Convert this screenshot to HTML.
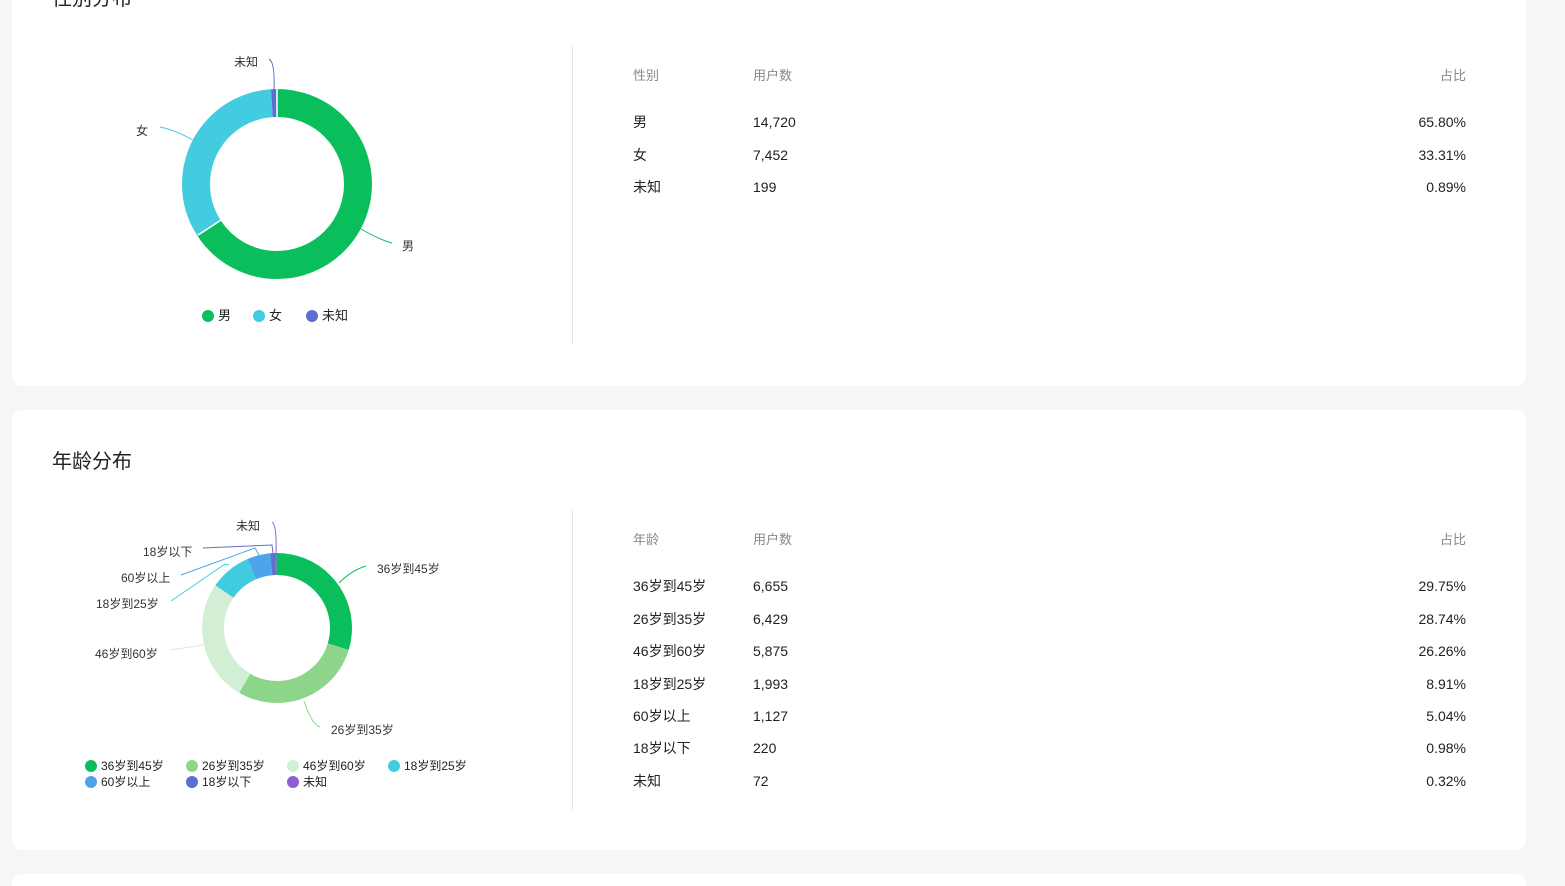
<!DOCTYPE html>
<html style="overflow:hidden;height:886px"><head><meta charset="utf-8"><style>
*{margin:0;padding:0;box-sizing:border-box}
body{width:1565px;height:886px;background:#f5f6f8;position:relative;overflow:hidden;font-family:"Liberation Sans","Noto Sans CJK SC",sans-serif;color:#222}
.card{position:absolute;left:12px;width:1514px;background:#fff;border-radius:10px}
.t{position:absolute;white-space:nowrap;font-size:14px;line-height:16px}
.h{color:#888;font-size:13px}
.r{text-align:right}
.title{position:absolute;font-size:20px;color:#222;white-space:nowrap}
.vl{position:absolute;left:572px;width:1px;background:#e8e8e8}
.lg{position:absolute;font-size:13px;white-space:nowrap;line-height:14px}
.dot{display:inline-block;width:12px;height:12px;border-radius:50%;vertical-align:-2px;margin-right:4px}
svg text{font-family:"Liberation Sans","Noto Sans CJK SC",sans-serif;font-size:12px;fill:#333}
</style></head><body>
<div class="card" style="top:-20px;height:406px"></div>
<div class="card" style="top:410px;height:440px"></div>
<div class="card" style="top:874px;height:12px;border-radius:10px 10px 0 0"></div>
<div class="title" style="left:52px;top:-18px">性别分布</div>
<div class="title" style="left:52px;top:445px">年龄分布</div>
<div class="vl" style="top:45px;height:300px"></div>
<div class="vl" style="top:510px;height:300px"></div>

<svg width="1565" height="886" style="position:absolute;left:0;top:0">
<g transform="rotate(-90 277 184)" fill="none" stroke-width="28">
<circle cx="277" cy="184" r="81" pathLength="100" stroke="#0abf5b" stroke-dasharray="65.8 34.2"/>
<circle cx="277" cy="184" r="81" pathLength="100" stroke="#43cbe0" stroke-dasharray="33.31 66.69" stroke-dashoffset="-65.8"/>
<circle cx="277" cy="184" r="81" pathLength="100" stroke="#5b6fd0" stroke-dasharray="0.89 99.11" stroke-dashoffset="-99.11"/>
</g>
<line x1="277" y1="89" x2="277" y2="118" stroke="#fff" stroke-width="1.5"/>
<line x1="198" y1="235" x2="221" y2="220" stroke="#fff" stroke-width="1.5"/>
<path d="M361 229 Q380 240 392 243" stroke="#0abf5b" fill="none"/>
<path d="M193 140 Q175 130 160 127" stroke="#43cbe0" fill="none"/>
<path d="M274 89 Q275 62 269 59" stroke="#5b6fd0" fill="none"/>
<text x="402" y="250">男</text><text x="136" y="135">女</text><text x="234" y="66">未知</text>

<g transform="rotate(-90 277 628)" fill="none" stroke-width="22">
<circle cx="277" cy="628" r="64" pathLength="100" stroke="#0abf5b" stroke-dasharray="29.75 70.25"/>
<circle cx="277" cy="628" r="64" pathLength="100" stroke="#8ed58c" stroke-dasharray="28.74 71.26" stroke-dashoffset="-29.75"/>
<circle cx="277" cy="628" r="64" pathLength="100" stroke="#d2eed5" stroke-dasharray="26.26 73.74" stroke-dashoffset="-58.49"/>
<circle cx="277" cy="628" r="64" pathLength="100" stroke="#41cbe0" stroke-dasharray="8.91 91.09" stroke-dashoffset="-84.75"/>
<circle cx="277" cy="628" r="64" pathLength="100" stroke="#4ea4e8" stroke-dasharray="5.04 94.96" stroke-dashoffset="-93.66"/>
<circle cx="277" cy="628" r="64" pathLength="100" stroke="#5b6fd0" stroke-dasharray="0.98 99.02" stroke-dashoffset="-98.7"/>
<circle cx="277" cy="628" r="64" pathLength="100" stroke="#8e5fd0" stroke-dasharray="0.32 99.68" stroke-dashoffset="-99.68"/>
</g>
<path d="M339 583 Q352 570 366 566" stroke="#0abf5b" fill="none"/>
<path d="M304 701 Q312 725 320 727" stroke="#8ed58c" fill="none"/>
<path d="M203 645 L170 650" stroke="#d2eed5" fill="none"/>
<path d="M229 565 L225 564 L171 601" stroke="#41cbe0" fill="none"/>
<path d="M259 555 L255 548 L181 575" stroke="#4ea4e8" fill="none"/>
<path d="M273 553 L272 545 L203 548" stroke="#5b6fd0" fill="none"/>
<path d="M276 553 Q277 525 272 522" stroke="#8e5fd0" fill="none"/>
<text x="377" y="573">36岁到45岁</text><text x="331" y="734">26岁到35岁</text>
<text x="95" y="658">46岁到60岁</text><text x="96" y="608">18岁到25岁</text>
<text x="121" y="582">60岁以上</text><text x="143" y="556">18岁以下</text><text x="236" y="530">未知</text>
</svg>

<div class="lg" style="left:202px;top:309px"><span class="dot" style="background:#0abf5b"></span>男</div>
<div class="lg" style="left:253px;top:309px"><span class="dot" style="background:#43cbe0"></span>女</div>
<div class="lg" style="left:306px;top:309px"><span class="dot" style="background:#5b6fd0"></span>未知</div>

<div class="lg" style="left:85px;top:759px;font-size:12px"><span class="dot" style="background:#0abf5b"></span>36岁到45岁</div>
<div class="lg" style="left:186px;top:759px;font-size:12px"><span class="dot" style="background:#8ed58c"></span>26岁到35岁</div>
<div class="lg" style="left:287px;top:759px;font-size:12px"><span class="dot" style="background:#d2eed5"></span>46岁到60岁</div>
<div class="lg" style="left:388px;top:759px;font-size:12px"><span class="dot" style="background:#41cbe0"></span>18岁到25岁</div>
<div class="lg" style="left:85px;top:775px;font-size:12px"><span class="dot" style="background:#4ea4e8"></span>60岁以上</div>
<div class="lg" style="left:186px;top:775px;font-size:12px"><span class="dot" style="background:#5b6fd0"></span>18岁以下</div>
<div class="lg" style="left:287px;top:775px;font-size:12px"><span class="dot" style="background:#8e5fd0"></span>未知</div>

<div class="t h" style="left:633px;top:68px">性别</div>
<div class="t h" style="left:753px;top:68px">用户数</div>
<div class="t h r" style="left:1366px;width:100px;top:68px">占比</div>
<div class="t" style="left:633px;top:114px">男</div><div class="t" style="left:753px;top:114px">14,720</div><div class="t r" style="left:1366px;width:100px;top:114px">65.80%</div>
<div class="t" style="left:633px;top:147px">女</div><div class="t" style="left:753px;top:147px">7,452</div><div class="t r" style="left:1366px;width:100px;top:147px">33.31%</div>
<div class="t" style="left:633px;top:179px">未知</div><div class="t" style="left:753px;top:179px">199</div><div class="t r" style="left:1366px;width:100px;top:179px">0.89%</div>

<div class="t h" style="left:633px;top:532px">年龄</div>
<div class="t h" style="left:753px;top:532px">用户数</div>
<div class="t h r" style="left:1366px;width:100px;top:532px">占比</div>
<div class="t" style="left:633px;top:578px">36岁到45岁</div><div class="t" style="left:753px;top:578px">6,655</div><div class="t r" style="left:1366px;width:100px;top:578px">29.75%</div>
<div class="t" style="left:633px;top:611px">26岁到35岁</div><div class="t" style="left:753px;top:611px">6,429</div><div class="t r" style="left:1366px;width:100px;top:611px">28.74%</div>
<div class="t" style="left:633px;top:643px">46岁到60岁</div><div class="t" style="left:753px;top:643px">5,875</div><div class="t r" style="left:1366px;width:100px;top:643px">26.26%</div>
<div class="t" style="left:633px;top:676px">18岁到25岁</div><div class="t" style="left:753px;top:676px">1,993</div><div class="t r" style="left:1366px;width:100px;top:676px">8.91%</div>
<div class="t" style="left:633px;top:708px">60岁以上</div><div class="t" style="left:753px;top:708px">1,127</div><div class="t r" style="left:1366px;width:100px;top:708px">5.04%</div>
<div class="t" style="left:633px;top:740px">18岁以下</div><div class="t" style="left:753px;top:740px">220</div><div class="t r" style="left:1366px;width:100px;top:740px">0.98%</div>
<div class="t" style="left:633px;top:773px">未知</div><div class="t" style="left:753px;top:773px">72</div><div class="t r" style="left:1366px;width:100px;top:773px">0.32%</div>
</body></html>
